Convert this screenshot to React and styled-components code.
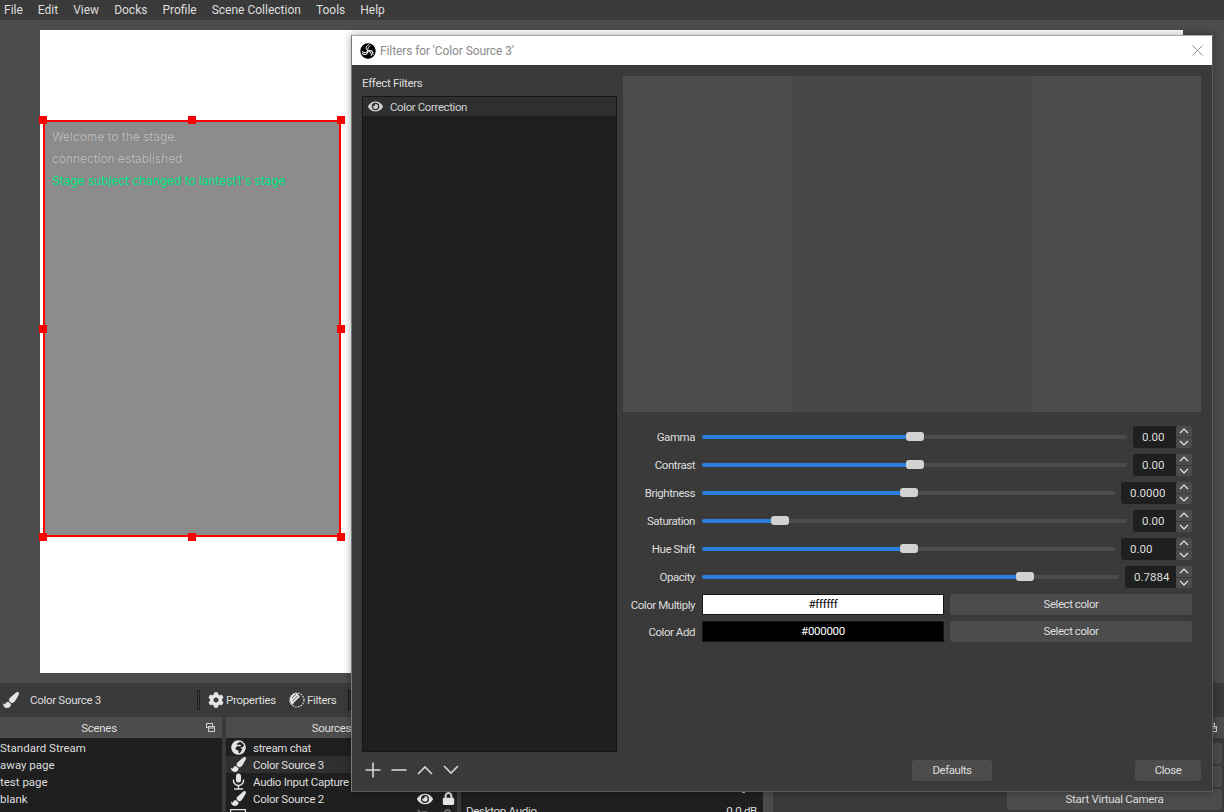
import styled, { createGlobalStyle } from "styled-components";
import {
  FaCog,
  FaEye,
  FaEyeSlash,
  FaGlobeAfrica,
  FaLock,
  FaPaintBrush,
  FaVolumeUp,
} from "react-icons/fa";

const GlobalStyle = createGlobalStyle`
  html, body {
    margin: 0;
    padding: 0;
    background: #3a3a3a;
  }
  body {
    font-family: Roboto, "Liberation Sans", sans-serif;
    font-size: 11.5px;
    letter-spacing: -0.3px;
    color: #dedede;
    overflow: hidden;
  }
`;

const Page = styled.div`
  position: relative;
  width: 1224px;
  height: 812px;
  overflow: hidden;
  display: flex;
  flex-direction: column;
  background: #3a3a3a;
`;

const MenuBar = styled.div`
  height: 20px;
  display: flex;
  align-items: center;
  padding-left: 4px;
  gap: 15px;
  background: #3a3a3a;
  font-size: 12px;
  letter-spacing: 0;
`;

const PreviewArea = styled.div`
  height: 663px;
  padding: 10px 41px 10px 40px;
  box-sizing: border-box;
  background: #4c4c4c;
`;

const Canvas = styled.div`
  position: relative;
  height: 100%;
  background: #fff;
`;

const SourceBox = styled.div`
  position: absolute;
  left: 3px;
  top: 90px;
  width: 298px;
  height: 417px;
  box-sizing: border-box;
  border: 2px solid #ff0000;
  background: #8c8c8c;
  padding: 4px 0 0 7px;
  font-family: Inter, "Liberation Sans", sans-serif;
  font-size: 11.9px;
  letter-spacing: 0;
`;

const ChatLine = styled.div`
  height: 22px;
  line-height: 22px;
  white-space: nowrap;
  color: ${(p) => p.$color || "#bdbdbd"};
  text-shadow: 0 0 1px rgba(60, 60, 60, 0.35);
`;

const Handle = styled.div`
  position: absolute;
  width: 8px;
  height: 8px;
  background: #ff0000;
  transform: translate(-50%, -50%);
  left: calc(${(p) => p.$x}% + ${(p) => (p.$x / 100) * 4 - 2}px);
  top: calc(${(p) => p.$y}% + ${(p) => (p.$y / 100) * 4 - 2}px);
`;

const ContextBar = styled.div`
  height: 34px;
  display: flex;
  align-items: center;
  background: #3a3a3a;
`;

const ContextName = styled.div`
  width: 167px;
  margin-left: 11px;
`;

const BarSeparator = styled.div`
  width: 1px;
  height: 18px;
  border: 1px solid #1f1f1f;
  background: #3a3a3a;
`;

const ContextButton = styled.div`
  display: flex;
  align-items: center;
  gap: 2px;
  margin-left: ${(p) => p.$left}px;
  margin-right: ${(p) => p.$right || 0}px;
`;

const Docks = styled.div`
  flex: 1;
  display: flex;
  min-height: 0;
`;

const Dock = styled.div`
  width: ${(p) => p.$width}px;
  margin-right: ${(p) => p.$gap || 0}px;
  display: flex;
  flex-direction: column;
  flex-shrink: 0;
`;

const DockTitle = styled.div`
  height: 21px;
  display: flex;
  align-items: center;
  background: #4c4c4c;
  flex-shrink: 0;
  span {
    flex: 1;
    text-align: center;
  }
`;

const FloatButton = styled.div`
  width: ${(p) => p.$width || 24}px;
  display: flex;
  justify-content: center;
  color: #cfcfcf;
`;

const DockList = styled.div`
  flex: 1;
  padding-top: 1px;
  background: #1f1f1f;
`;

const SceneRow = styled.div`
  height: 17px;
  line-height: 18px;
  letter-spacing: 0;
  white-space: nowrap;
`;

const SourceRow = styled.div`
  height: 17px;
  display: flex;
  align-items: center;
  padding-left: 4px;
  white-space: nowrap;
  background: ${(p) => (p.$selected ? "#2f2f2f" : "transparent")};
  color: #dedede;
`;

const SourceIcon = styled.div`
  width: 16px;
  height: 17px;
  margin-right: 7px;
  display: flex;
  align-items: center;
  justify-content: center;
  color: #e4e4e4;
  flex-shrink: 0;
`;

const SourceName = styled.div`
  flex: 1;
  line-height: 18px;
`;

const SourceFlags = styled.div`
  width: 40px;
  display: flex;
  align-items: center;
  gap: 9px;
  color: ${(p) => (p.$dim ? "#6a6a6a" : "#e4e4e4")};
`;

const MixerBody = styled.div`
  flex: 1;
  display: flex;
  min-height: 0;
`;

const MixerList = styled.div`
  width: 302px;
  padding: 0 6px 0 5px;
  box-sizing: border-box;
  background: #1f1f1f;
`;

const MixerStrip = styled.div`
  height: ${(p) => p.$height}px;
  display: flex;
  align-items: flex-end;
  justify-content: ${(p) => (p.$icons ? "flex-end" : "space-between")};
  gap: 13px;
  padding-right: ${(p) => (p.$icons ? 7 : 0)}px;
  color: #dedede;
`;

const MixerScroll = styled.div`
  width: 10px;
  background: #4c4c4c;
`;

const ControlList = styled.div`
  display: flex;
  flex-direction: column;
  gap: 2px;
  padding: 5px 2px 0 0;
`;

const ControlButton = styled.div`
  height: 21px;
  line-height: 21px;
  flex-shrink: 0;
  text-align: center;
  border-radius: 3px;
  background: #4c4c4c;
`;

/* the floating filter window */
const FilterWindow = styled.div`
  position: absolute;
  left: 351px;
  top: 35px;
  width: 862px;
  height: 757px;
  box-sizing: border-box;
  display: flex;
  flex-direction: column;
  border: 1px solid #9c9c9c;
  border-color: #a8a8a8 #5a5a5a #5a5a5a #7a7a7a;
  box-shadow: 0 0 8px rgba(0, 0, 0, 0.35);
  background: #3a3a3a;
`;

const TitleBar = styled.div`
  height: 29px;
  display: flex;
  align-items: center;
  padding: 0 9px 0 8px;
  background: #fff;
  color: #8a8a8a;
  flex-shrink: 0;
  font-size: 12px;
  letter-spacing: -0.1px;
`;

const TitleText = styled.div`
  flex: 1;
  margin-left: 4px;
`;

const WindowBody = styled.div`
  flex: 1;
  display: flex;
  gap: 6px;
  min-height: 0;
  padding: 11px 11px 10px 10px;
`;

const FilterColumn = styled.div`
  width: 255px;
  display: flex;
  flex-direction: column;
`;

const ColumnLabel = styled.div`
  height: 20px;
  line-height: 15px;
`;

const FilterList = styled.div`
  height: 656px;
  box-sizing: border-box;
  border: 1px solid #161616;
  background: #1f1f1f;
`;

const FilterRow = styled.div`
  height: 19px;
  display: flex;
  align-items: center;
  gap: 7px;
  padding-left: 5px;
  background: #2f2f2f;
  color: #cfcfcf;
  letter-spacing: -0.4px;
`;

const FilterTools = styled.div`
  flex: 1;
  display: flex;
  align-items: center;
  gap: 10px;
  padding: 6px 0 0 3px;
  color: #d6d6d6;
`;

const SettingsColumn = styled.div`
  flex: 1;
  display: flex;
  flex-direction: column;
`;

const PreviewPane = styled.div`
  height: 336px;
  display: flex;
  flex-shrink: 0;
`;

const PreviewBand = styled.div`
  width: ${(p) => p.$width}px;
  background: ${(p) => p.$color};
`;

const SettingsForm = styled.div`
  display: flex;
  flex-direction: column;
  gap: 6px;
  margin-top: 14px;
  margin-right: 9px;
`;

const SliderRow = styled.div`
  height: 22px;
  display: flex;
  align-items: center;
`;

const FieldLabel = styled.div`
  width: 72px;
  flex-shrink: 0;
  margin-right: 7px;
  text-align: right;
  white-space: nowrap;
  color: #dedede;
  letter-spacing: -0.45px;
`;

const Track = styled.div`
  position: relative;
  flex: 1;
  height: 4px;
  margin-right: 6px;
  border-radius: 2px;
  background: #4c4c4c;
`;

const TrackFill = styled.div`
  height: 100%;
  border-radius: 2px;
  background: #2a7fdc;
`;

const Thumb = styled.div`
  position: absolute;
  top: -3px;
  width: 18px;
  height: 9px;
  margin-left: -9px;
  border-radius: 3px;
  background: #d2d2d2;
`;

const SpinInput = styled.div`
  width: ${(p) => p.$width}px;
  height: 22px;
  line-height: 22px;
  box-sizing: border-box;
  padding-left: 9px;
  border-radius: 3px 0 0 3px;
  background: #1f1f1f;
  flex-shrink: 0;
  letter-spacing: 0;
`;

const SpinButtons = styled.div`
  width: 16px;
  height: 22px;
  display: flex;
  flex-direction: column;
  gap: 1px;
  flex-shrink: 0;
`;

const SpinButton = styled.div`
  flex: 1;
  display: flex;
  align-items: center;
  justify-content: center;
  background: #4c4c4c;
  border-radius: ${(p) => (p.$down ? "0 0 3px 3px" : "3px 3px 0 0")};
  color: #e6e6e6;
`;

const ColorRow = styled.div`
  height: 21px;
  display: flex;
  align-items: center;
`;

const ColorSwatch = styled.div`
  width: 242px;
  height: 21px;
  line-height: 19px;
  box-sizing: border-box;
  margin-right: 6px;
  border: 1px solid #161616;
  text-align: center;
  background: ${(p) => p.$color};
  color: ${(p) => (p.$color === "#ffffff" ? "#000" : "#fff")};
`;

const PushButton = styled.div`
  width: ${(p) => p.$width || "auto"};
  flex: ${(p) => (p.$width ? "none" : 1)};
  height: 21px;
  line-height: 21px;
  text-align: center;
  border-radius: 3px;
  background: #4c4c4c;
  letter-spacing: -0.45px;
`;

const WindowFooter = styled.div`
  margin-top: auto;
  display: flex;
  justify-content: flex-end;
  gap: 143px;
`;

const menus = ["File", "Edit", "View", "Docks", "Profile", "Scene Collection", "Tools", "Help"];
const scenes = ["Standard Stream", "away page", "test page", "blank"];
const sliders = [
  { label: "Gamma", value: "0.00", pct: 50, input: 43 },
  { label: "Contrast", value: "0.00", pct: 50, input: 43 },
  { label: "Brightness", value: "0.0000", pct: 50, input: 55 },
  { label: "Saturation", value: "0.00", pct: 18.3, input: 43 },
  { label: "Hue Shift", value: "0.00", pct: 50, input: 55 },
  { label: "Opacity", value: "0.7884", pct: 77.5, input: 51 },
];
const handles = [
  [0, 0],
  [50, 0],
  [100, 0],
  [0, 50],
  [100, 50],
  [0, 100],
  [50, 100],
  [100, 100],
];

function FloatIcon() {
  return (
    <svg width="9" height="9" viewBox="0 0 9 9" fill="none" stroke="currentColor">
      <rect x="0.5" y="0.5" width="6" height="4" />
      <rect x="2.5" y="3.5" width="6" height="5" fill="#4c4c4c" />
      <line x1="2.5" y1="5" x2="8.5" y2="5" />
    </svg>
  );
}

function ObsLogo() {
  const blade = "M12 12 C8 9.5 8 4.5 13.5 2.5 M12 12 C11 8.5 12.5 5 16 4";
  return (
    <svg width="16" height="16" viewBox="0 0 24 24">
      <circle cx="12" cy="12" r="11.5" fill="#000" />
      {[0, 120, 240].map((r) => (
        <path key={r} d={blade} fill="none" stroke="#fff" strokeWidth="1.5" transform={`rotate(${r} 12 12)`} />
      ))}
    </svg>
  );
}

function CloseIcon() {
  return (
    <svg width="11" height="11" viewBox="0 0 11 11" stroke="#8c8c8c">
      <line x1="0.5" y1="0.5" x2="10.5" y2="10.5" />
      <line x1="10.5" y1="0.5" x2="0.5" y2="10.5" />
    </svg>
  );
}

function FilterIcon() {
  return (
    <svg width="16" height="16" viewBox="0 0 16 16" fill="none" stroke="#e4e4e4">
      <circle cx="8" cy="8" r="7" strokeWidth="1.2" strokeDasharray="1.6 1.2" />
      <path d="M8 1 A7 7 0 0 0 3 13 L11 5 Z" fill="#e4e4e4" stroke="none" />
      <path d="M3 6 L7 2 M3.5 9 L8.5 4 M5 11 L10 6 M7 12.5 L11 8.5" stroke="#3a3a3a" strokeWidth="0.8" />
    </svg>
  );
}

function MicIcon() {
  return (
    <svg width="15" height="17" viewBox="0 0 15 17" fill="none" stroke="currentColor" strokeWidth="1.4">
      <rect x="5" y="0.5" width="5" height="9" rx="2.5" fill="currentColor" stroke="none" />
      <path d="M2.5 6.5 V7.5 A5 5 0 0 0 12.5 7.5 V6.5" />
      <line x1="7.5" y1="12.5" x2="7.5" y2="15.5" />
      <line x1="3" y1="16" x2="12" y2="16" />
    </svg>
  );
}

function MonitorIcon() {
  return (
    <svg width="16" height="13" viewBox="0 0 16 13" fill="none" stroke="currentColor" strokeWidth="1.2">
      <rect x="0.6" y="0.6" width="14.8" height="9.5" />
    </svg>
  );
}

function ToolIcon({ d }) {
  return (
    <svg width="16" height="16" viewBox="0 0 16 16" fill="none" stroke="currentColor" strokeWidth="1.6">
      <path d={d} />
    </svg>
  );
}

function SpinChevron({ down }) {
  return (
    <svg width="10" height="6" viewBox="0 0 10 6" fill="none" stroke="currentColor" strokeWidth="1.2">
      <path d={down ? "M1 1 L5 5 L9 1" : "M1 5 L5 1 L9 5"} />
    </svg>
  );
}

function Flags({ dim }) {
  return (
    <SourceFlags $dim={dim}>
      {dim ? <FaEyeSlash size={15} /> : <FaEye size={16} />}
      <FaLock size={13} />
    </SourceFlags>
  );
}

function SliderField({ label, value, pct, input }) {
  return (
    <SliderRow>
      <FieldLabel>{label}</FieldLabel>
      <Track>
        <TrackFill style={{ width: `${pct}%` }} />
        <Thumb style={{ left: `${pct}%` }} />
      </Track>
      <SpinInput $width={input}>{value}</SpinInput>
      <SpinButtons>
        <SpinButton>
          <SpinChevron />
        </SpinButton>
        <SpinButton $down>
          <SpinChevron down />
        </SpinButton>
      </SpinButtons>
    </SliderRow>
  );
}

function ColorField({ label, color, text }) {
  return (
    <ColorRow>
      <FieldLabel>{label}</FieldLabel>
      <ColorSwatch $color={color}>{text}</ColorSwatch>
      <PushButton>Select color</PushButton>
    </ColorRow>
  );
}

function App() {
  return (
    <Page>
      <GlobalStyle />
      <MenuBar>
        {menus.map((m) => (
          <div key={m}>{m}</div>
        ))}
      </MenuBar>

      <PreviewArea>
        <Canvas>
          <SourceBox>
            <ChatLine>Welcome to the stage.</ChatLine>
            <ChatLine>connection established</ChatLine>
            <ChatLine $color="#00f08c">Stage subject changed to lantest1's stage</ChatLine>
            {handles.map(([x, y]) => (
              <Handle key={`${x}-${y}`} $x={x} $y={y} />
            ))}
          </SourceBox>
        </Canvas>
      </PreviewArea>

      <ContextBar>
        <FaPaintBrush size={16} color="#e4e4e4" style={{ marginLeft: 3 }} />
        <ContextName>Color Source 3</ContextName>
        <BarSeparator />
        <ContextButton $left={8}>
          <FaCog size={16} color="#e4e4e4" />
          Properties
        </ContextButton>
        <ContextButton $left={13} $right={12}>
          <FilterIcon />
          Filters
        </ContextButton>
        <BarSeparator />
      </ContextBar>

      <Docks>
        <Dock $width={222} $gap={4}>
          <DockTitle>
            <span>Scenes</span>
            <FloatButton>
              <FloatIcon />
            </FloatButton>
          </DockTitle>
          <DockList>
            {scenes.map((s) => (
              <SceneRow key={s}>{s}</SceneRow>
            ))}
          </DockList>
        </Dock>

        <Dock $width={231} $gap={4}>
          <DockTitle>
            <span>Sources</span>
            <FloatButton $width={20}>
              <FloatIcon />
            </FloatButton>
          </DockTitle>
          <DockList>
            <SourceRow>
              <SourceIcon>
                <FaGlobeAfrica size={15} />
              </SourceIcon>
              <SourceName>stream chat</SourceName>
              <Flags />
            </SourceRow>
            <SourceRow $selected>
              <SourceIcon>
                <FaPaintBrush size={15} />
              </SourceIcon>
              <SourceName>Color Source 3</SourceName>
              <Flags />
            </SourceRow>
            <SourceRow>
              <SourceIcon>
                <MicIcon />
              </SourceIcon>
              <SourceName>Audio Input Capture</SourceName>
              <Flags />
            </SourceRow>
            <SourceRow>
              <SourceIcon>
                <FaPaintBrush size={15} />
              </SourceIcon>
              <SourceName>Color Source 2</SourceName>
              <Flags />
            </SourceRow>
            <SourceRow>
              <SourceIcon>
                <MonitorIcon />
              </SourceIcon>
              <SourceName />
              <Flags dim />
            </SourceRow>
          </DockList>
        </Dock>

        <Dock $width={312} $gap={3}>
          <DockTitle>
            <span>Audio Mixer</span>
          </DockTitle>
          <MixerBody>
            <MixerList>
              <MixerStrip $height={55} $icons>
                <FaVolumeUp size={15} color="#dedede" />
                <FaCog size={13} color="#dedede" />
              </MixerStrip>
              <MixerStrip $height={25}>
                <span>Desktop Audio</span>
                <span>0.0 dB</span>
              </MixerStrip>
            </MixerList>
            <MixerScroll />
          </MixerBody>
        </Dock>

        <Dock $width={227} $gap={4}>
          <DockTitle>
            <span>Scene Transitions</span>
          </DockTitle>
        </Dock>

        <Dock $width={217}>
          <DockTitle>
            <span>Controls</span>
            <FloatButton>
              <FloatIcon />
            </FloatButton>
          </DockTitle>
          <ControlList>
            <ControlButton>Start Streaming</ControlButton>
            <ControlButton>Start Recording</ControlButton>
            <ControlButton>Start Virtual Camera</ControlButton>
            <ControlButton />
          </ControlList>
        </Dock>
      </Docks>

      <FilterWindow>
        <TitleBar>
          <ObsLogo />
          <TitleText>Filters for 'Color Source 3'</TitleText>
          <CloseIcon />
        </TitleBar>
        <WindowBody>
          <FilterColumn>
            <ColumnLabel>Effect Filters</ColumnLabel>
            <FilterList>
              <FilterRow>
                <FaEye size={15} />
                Color Correction
              </FilterRow>
            </FilterList>
            <FilterTools>
              <ToolIcon d="M8 0.5 V15.5 M0.5 8 H15.5" />
              <ToolIcon d="M0.5 8 H15.5" />
              <ToolIcon d="M1 12 L8 5 L15 12" />
              <ToolIcon d="M1 4 L8 11 L15 4" />
            </FilterTools>
          </FilterColumn>

          <SettingsColumn>
            <PreviewPane>
              <PreviewBand $width={169} $color="#4c4c4c" />
              <PreviewBand $width={240} $color="#474747" />
              <PreviewBand $width={169} $color="#4c4c4c" />
            </PreviewPane>
            <SettingsForm>
              {sliders.map((s) => (
                <SliderField key={s.label} {...s} />
              ))}
              <ColorField label="Color Multiply" color="#ffffff" text="#ffffff" />
              <ColorField label="Color Add" color="#000000" text="#000000" />
            </SettingsForm>
            <WindowFooter>
              <PushButton $width="80px">Defaults</PushButton>
              <PushButton $width="66px">Close</PushButton>
            </WindowFooter>
          </SettingsColumn>
        </WindowBody>
      </FilterWindow>
    </Page>
  );
}

export default App;
